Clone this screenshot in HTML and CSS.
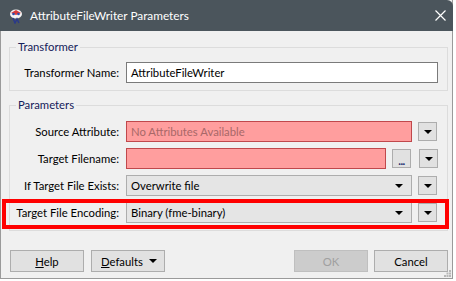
FILE: index.html
```html
<!DOCTYPE html>
<html lang="en">
<head>
  <meta charset="UTF-8" />
  <title>AttributeFileWriter Parameters</title>
  <link rel="stylesheet" href="styles.css">
</head>
<body>

  <div class="window">
    <div class="titlebar">
      <svg class="app-icon" width="16" height="16" viewBox="0 0 16 16">
        <ellipse cx="8" cy="6" rx="6" ry="4.5" fill="#f4f4f4"/>
        <path d="M3 5 L8 2 L13 5 L8 7 Z" fill="#d83a3a"/>
        <circle cx="5.5" cy="6" r="1.3" fill="#2b4fb0"/>
        <circle cx="10.5" cy="6" r="1.3" fill="#2b4fb0"/>
        <path d="M5 10 L7 15 L9 11 L11 15" stroke="#2b3a8a" stroke-width="1.5" fill="none"/>
      </svg>
      <span class="title">AttributeFileWriter Parameters</span>
      <svg class="close" width="11" height="11" viewBox="0 0 11 11">
        <path d="M0.5 0.5 L10.5 10.5 M10.5 0.5 L0.5 10.5" stroke="#fff" stroke-width="1.2"/>
      </svg>
    </div>

    <div class="content">
      <fieldset class="group group-transformer">
        <legend>Transformer</legend>
        <div class="row">
          <label>Transformer Name:</label>
          <div class="field text wide">AttributeFileWriter</div>
        </div>
      </fieldset>

      <fieldset class="group group-params">
        <legend>Parameters</legend>
        <div class="row">
          <label>Source Attribute:</label>
          <div class="field error long placeholder">No Attributes Available</div>
          <div class="mini-btn"><span class="tri"></span></div>
        </div>
        <div class="row">
          <label>Target Filename:</label>
          <div class="field error short"></div>
          <div class="mini-btn dots">...</div>
          <div class="mini-btn spaced"><span class="tri"></span></div>
        </div>
        <div class="row">
          <label>If Target File Exists:</label>
          <div class="field combo long">Overwrite file<span class="tri"></span></div>
          <div class="mini-btn"><span class="tri"></span></div>
        </div>
        <div class="row">
          <label>Target File Encoding:</label>
          <div class="field combo long">Binary (fme-binary)<span class="tri"></span></div>
          <div class="mini-btn"><span class="tri"></span></div>
        </div>
      </fieldset>

      <div class="buttons">
        <div class="btn"><span><u>H</u>elp</span></div>
        <div class="btn defaults"><span><u>D</u>efaults</span><span class="tri"></span></div>
        <div class="spacer"></div>
        <div class="btn disabled">OK</div>
        <div class="btn">Cancel</div>
      </div>
    </div>

    <svg class="grip" width="7" height="7" viewBox="0 0 7 7">
      <rect x="5" y="0" width="2" height="2" fill="#b8b8b8"/>
      <rect x="2.5" y="2.5" width="2" height="2" fill="#b8b8b8"/>
      <rect x="5" y="2.5" width="2" height="2" fill="#b8b8b8"/>
      <rect x="0" y="5" width="2" height="2" fill="#b8b8b8"/>
      <rect x="2.5" y="5" width="2" height="2" fill="#b8b8b8"/>
      <rect x="5" y="5" width="2" height="2" fill="#b8b8b8"/>
    </svg>

    <div class="highlight"></div>
  </div>

</body>
</html>
```

FILE: styles.css
```css
body {
  margin: 0;
  background: #fff;
  font-family: Lato, "Liberation Sans", Arial, sans-serif;
  font-size: 11.3px;
  color: #000;
}
.window {
  position: relative;
  width: 451px;
  height: 278px;
  background: #f0f0f0;
  border: 1px solid #9a9a9a;
  border-top: none;
}
.titlebar {
  height: 31px;
  margin: 0 -1px;
  background: #4b555c;
  display: flex;
  align-items: center;
  color: #fff;
  border-top-right-radius: 6px;
}
.app-icon {
  margin-left: 8px;
  margin-right: 6px;
}
.title {
  flex: 1;
  font-size: 11.8px;
}
.close {
  margin-right: 7px;
}
.content {
  padding: 8px 4px 0 8px;
}
.group {
  margin: 0;
  padding: 0 0 7px 0;
  border: 1px solid #dcdcdc;
}
.group legend {
  margin-left: 6px;
  padding: 0 2px;
  line-height: 16px;
  color: #14205a;
}
.group-transformer {
  padding-top: 7px;
}
.group-params {
  margin-top: 6px;
  padding-top: 8px;
  display: flex;
  flex-direction: column;
  gap: 6px;
}
.row {
  display: flex;
  align-items: center;
  height: 21px;
}
.row label {
  width: 109px;
  flex-shrink: 0;
  margin-right: 7px;
  display: flex;
  justify-content: flex-end;
  white-space: nowrap;
}
.field {
  height: 21px;
  box-sizing: border-box;
  padding: 0 4px;
  display: flex;
  align-items: center;
  white-space: nowrap;
}
.text {
  background: #fff;
  border: 1px solid #7a7a7a;
}
.wide {
  width: 312px;
}
.long {
  width: 286px;
}
.short {
  width: 260px;
}
.error {
  background: #ff9e9e;
  border: 1px solid #c0484c;
}
.placeholder {
  color: #a86868;
}
.combo {
  background: #e5e5e5;
  border: 1px solid #adadad;
  justify-content: space-between;
}
.combo .tri {
  margin-right: 4px;
}
.tri {
  width: 0;
  height: 0;
  border-left: 4px solid transparent;
  border-right: 4px solid transparent;
  border-top: 4px solid #000;
}
.mini-btn {
  width: 19px;
  height: 19px;
  box-sizing: border-box;
  margin-left: 6px;
  background: #e1e1e1;
  border: 1px solid #adadad;
  display: flex;
  align-items: center;
  justify-content: center;
}
.mini-btn.spaced {
  margin-left: 8px;
}
.dots {
  align-items: flex-end;
  font-weight: bold;
  color: #1c2f6e;
  line-height: 12px;
  letter-spacing: -0.5px;
}
.buttons {
  margin-top: 19px;
  padding-left: 1px;
  display: flex;
  gap: 7px;
}
.spacer {
  flex: 1;
}
.btn {
  width: 74px;
  height: 22px;
  box-sizing: border-box;
  background: #e1e1e1;
  border: 1px solid #adadad;
  display: flex;
  align-items: center;
  justify-content: center;
}
.btn.defaults {
  justify-content: space-between;
  padding: 0 7px 0 9px;
}
.btn.disabled {
  background: #cccccc;
  border-color: #bfbfbf;
  color: #a0a0a0;
  margin-right: -1px;
}
.grip {
  position: absolute;
  right: 1px;
  bottom: 1px;
}
.highlight {
  position: absolute;
  left: 1px;
  top: 199px;
  width: 447px;
  height: 30px;
  box-sizing: border-box;
  border: 4px solid #ff0000;
}
```
